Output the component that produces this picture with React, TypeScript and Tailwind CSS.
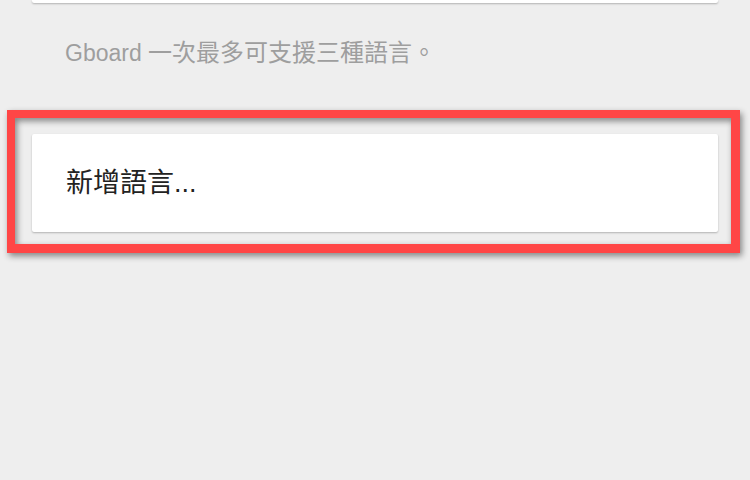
export default function App() {
  return (
    <div className="w-[750px] h-[480px] bg-[#eeeeee] overflow-hidden font-['Liberation_Sans','Noto_Sans_CJK_TC',sans-serif]">
      <div className="px-[32px] flex flex-col">
        <div className="h-[3px] bg-white rounded-b-[2px] shadow-[0_1px_2px_rgba(0,0,0,0.25)]" />
        <div className="h-[99px] flex items-center pl-[33px] text-[24px] leading-[36px] text-[#9e9e9e]">
          <span className="text-[23px]">Gboard&nbsp;</span>
          <span>一次最多可支援三種語言。</span>
        </div>
        <div className="relative mt-[32px] h-[98px] bg-white rounded-[2px] shadow-[0_1px_2px_rgba(0,0,0,0.25)] flex items-center pl-[34px] text-[27px] leading-[38px] text-[#222222]">
          新增語言...
          <div className="absolute -left-[25px] -top-[24px] -right-[22px] -bottom-[21px] border-[8px] border-r-[9px] border-b-[9px] border-[#ff4646] drop-shadow-[2px_3px_3px_rgba(0,0,0,0.45)]" />
        </div>
      </div>
    </div>
  );
}
